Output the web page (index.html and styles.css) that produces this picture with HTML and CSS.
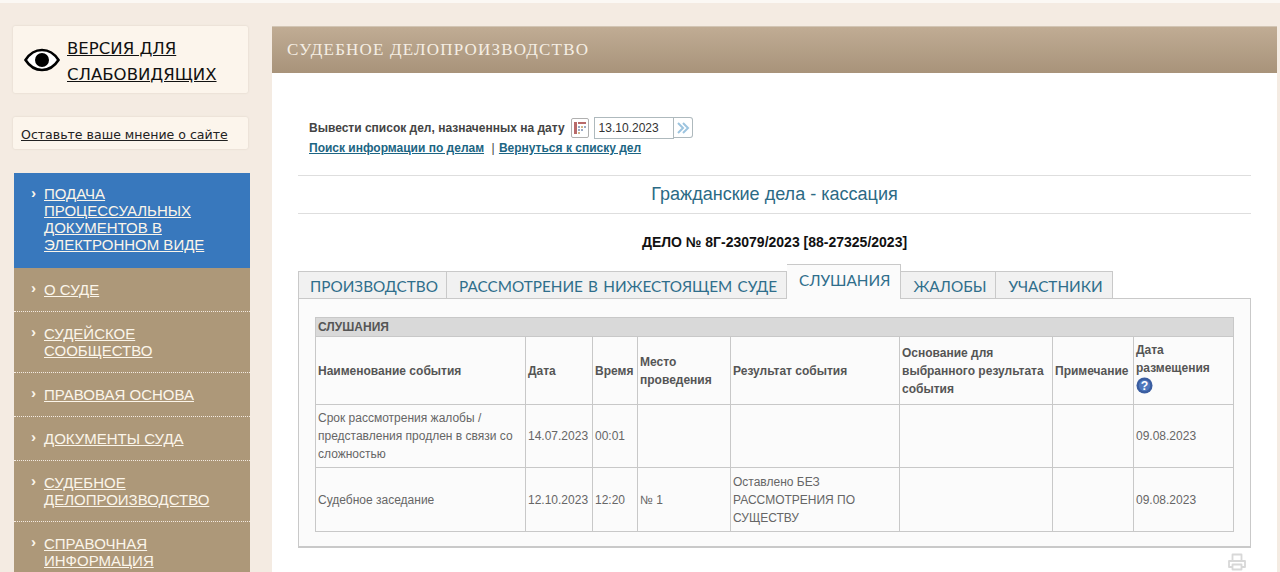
FILE: index.html
```html
<!doctype html>
<html>

<head>
  <title>Судебное делопроизводство</title>
  <link rel="stylesheet" href="styles.css">
</head>

<body>
  <div class="container">
    <div class="left-block">
      <div class="vi-box">
        <svg class="vi-icon" viewBox="0 0 36 24" width="36" height="24">
          <path d="M1.5 12C6 5 11.500 2 18 2s12 3 16.500 10C30 19 24.500 22 18 22S6 19 1.500 12z" fill="#fff" stroke="#000" stroke-width="2.600"/>
          <circle cx="18" cy="12" r="7" fill="#000"/>
        </svg>
        <a href="#" class="vi-link">ВЕРСИЯ ДЛЯ СЛАБОВИДЯЩИХ</a>
      </div>
      <div class="opinion-box"><a href="#">Оставьте ваше мнение о сайте</a></div>
      <ul class="menu">
        <li class="menu-active"><a href="#">ПОДАЧА ПРОЦЕССУАЛЬНЫХ ДОКУМЕНТОВ В ЭЛЕКТРОННОМ ВИДЕ</a></li>
        <li><a href="#">О СУДЕ</a></li>
        <li><a href="#">СУДЕЙСКОЕ СООБЩЕСТВО</a></li>
        <li><a href="#">ПРАВОВАЯ ОСНОВА</a></li>
        <li><a href="#">ДОКУМЕНТЫ СУДА</a></li>
        <li><a href="#">СУДЕБНОЕ ДЕЛОПРОИЗВОДСТВО</a></li>
        <li><a href="#">СПРАВОЧНАЯ ИНФОРМАЦИЯ</a></li>
      </ul>
    </div>

    <div class="right-block">
      <div class="page-title">СУДЕБНОЕ ДЕЛОПРОИЗВОДСТВО</div>
      <div class="content">
        <div class="filter">
          <div class="filter-row">
            <span>Вывести список дел, назначенных на дату</span>
            <span class="cal-button">
              <svg viewBox="0 0 14 14" width="14" height="14">
                <rect x="1" y="1" width="3" height="12" fill="#b86a6a"/>
                <rect x="5" y="1" width="8" height="2" fill="#b86a6a"/>
                <rect x="5" y="5" width="2" height="2" fill="#9aa9c4"/>
                <rect x="8" y="5" width="2" height="2" fill="#d3b68c"/>
                <rect x="11" y="5" width="2" height="2" fill="#9aa9c4"/>
                <rect x="5" y="8" width="2" height="2" fill="#9aa9c4"/>
                <rect x="8" y="8" width="2" height="2" fill="#9aa9c4"/>
                <rect x="5" y="11" width="2" height="2" fill="#d3b68c"/>
              </svg>
            </span>
            <span class="date-input">13.10.2023</span>
            <span class="go-button">
              <svg viewBox="0 0 14 12" width="14" height="12">
                <path d="M2 1l5 5-5 5M7 1l5 5-5 5" fill="none" stroke="#9cc4df" stroke-width="2"/>
              </svg>
            </span>
          </div>
          <div class="filter-links">
            <a href="#">Поиск информации по делам</a>
            <span class="sep">|</span>
            <a href="#">Вернуться к списку дел</a>
          </div>
        </div>

        <h2 class="section-title">Гражданские дела - кассация</h2>
        <div class="case-title">ДЕЛО № 8Г-23079/2023 [88-27325/2023]</div>

        <div class="tabs">
          <div class="tab">ПРОИЗВОДСТВО</div>
          <div class="tab">РАССМОТРЕНИЕ В НИЖЕСТОЯЩЕМ СУДЕ</div>
          <div class="tab tab-active">СЛУШАНИЯ</div>
          <div class="tab">ЖАЛОБЫ</div>
          <div class="tab">УЧАСТНИКИ</div>
        </div>

        <div class="panel">
          <table class="events">
            <colgroup>
              <col class="c1"><col class="c2"><col class="c3"><col class="c4">
              <col class="c5"><col class="c6"><col class="c7"><col class="c8">
            </colgroup>
            <tr class="caption-row"><td colspan="8">СЛУШАНИЯ</td></tr>
            <tr class="head-row">
              <th>Наименование события</th>
              <th>Дата</th>
              <th>Время</th>
              <th>Место проведения</th>
              <th>Результат события</th>
              <th>Основание для выбранного результата события</th>
              <th>Примечание</th>
              <th>Дата размещения
                <svg class="help" viewBox="0 0 18 18" width="17" height="17">
                  <circle cx="9" cy="9" r="8.500" fill="#3a5da0"/>
                  <circle cx="9" cy="9" r="6" fill="#4f78bd"/>
                  <text x="9" y="13.500" class="help-mark">?</text>
                </svg>
              </th>
            </tr>
            <tr class="row-one">
              <td>Срок рассмотрения жалобы / представления продлен в связи со сложностью</td>
              <td>14.07.2023</td>
              <td>00:01</td>
              <td></td>
              <td></td>
              <td></td>
              <td></td>
              <td>09.08.2023</td>
            </tr>
            <tr class="row-two">
              <td>Судебное заседание</td>
              <td>12.10.2023</td>
              <td>12:20</td>
              <td>№ 1</td>
              <td>Оставлено БЕЗ РАССМОТРЕНИЯ ПО СУЩЕСТВУ</td>
              <td></td>
              <td></td>
              <td>09.08.2023</td>
            </tr>
          </table>
        </div>

        <div class="print-row">
          <svg viewBox="0 0 18 18" width="18" height="18">
            <path d="M4.500 8V1.500h9V8M4.500 14H1V8h16v6h-3.500M4.500 11.500h9v5h-9z" fill="#fff" stroke="#d8d8d8" stroke-width="1.800" stroke-linejoin="round"/>
          </svg>
        </div>
      </div>
    </div>
  </div>
</body>

</html>
```

FILE: styles.css
```css
html, body {
  height: 572px;
  overflow: hidden;
}

body {
  margin: 0;
  background-color: #f4ebe2;
  border-top: 3px solid #fbf8f4;
  font-family: "Liberation Sans", Arial, sans-serif;
  box-sizing: border-box;
}

a {
  color: inherit;
}

.container {
  display: flex;
  padding-top: 23px;
}

/* left column */
.left-block {
  width: 237px;
  margin-left: 13px;
  flex-shrink: 0;
}

.vi-box {
  display: flex;
  align-items: center;
  gap: 7px;
  width: 235px;
  height: 67px;
  padding-left: 11px;
  box-sizing: border-box;
  background-color: #fcf5ec;
  border-radius: 2px;
  box-shadow: 0 0 2px #d9cfc3;
}

.vi-icon {
  flex-shrink: 0;
}

.vi-link {
  margin-top: 4px;
  font-family: "DejaVu Sans", sans-serif;
  font-size: 16.550px;
  line-height: 26px;
  color: #111;
}

.opinion-box {
  width: 235px;
  height: 32px;
  margin-top: 24px;
  padding-left: 8px;
  box-sizing: border-box;
  background-color: #fcf5ec;
  border-radius: 2px;
  box-shadow: 0 0 2px #d9cfc3;
  font-family: "DejaVu Sans", sans-serif;
  font-size: 12.550px;
  line-height: 35px;
  color: #222;
}

.menu {
  list-style: none;
  margin: 24px 0 0 1px;
  padding: 0;
}

.menu li {
  position: relative;
  padding: 13px 36px 13px 30px;
  background-color: #ad9879;
  border-bottom: 1px dotted #f4ebe2;
  font-size: 15px;
  line-height: 17px;
  color: #fbf5ea;
}

.menu li::before {
  content: "›";
  position: absolute;
  left: 17px;
  top: 11px;
  font-weight: bold;
  font-size: 15px;
}

.menu .menu-active {
  padding-top: 12px;
  padding-bottom: 15px;
  background-color: #3878bd;
  border-bottom: none;
}

/* right column */
.right-block {
  width: 1005px;
  margin-left: 22px;
  background-color: #fff;
  height: 560px;
}

.page-title {
  height: 47px;
  padding-left: 15px;
  background: linear-gradient(#c0ac94, #a8937a);
  border-top: 1px solid #d2c5b4;
  box-sizing: border-box;
  font-family: "Liberation Serif", serif;
  font-size: 17px;
  line-height: 46px;
  letter-spacing: 1.180px;
  color: #f5eee4;
}

.content {
  width: 953px;
  margin-left: 26px;
}

.filter {
  padding: 44px 0 0 11px;
  height: 58px;
  font-size: 12px;
  font-weight: bold;
  color: #444;
}

.filter-row {
  display: flex;
  align-items: center;
  height: 21px;
}

.cal-button {
  display: flex;
  align-items: center;
  justify-content: center;
  width: 18px;
  height: 20px;
  margin-left: 6px;
  border: 1px solid #b0b0b0;
  border-radius: 2px;
  box-sizing: border-box;
}

.date-input {
  width: 80px;
  height: 22px;
  margin-left: 5px;
  padding-left: 4px;
  border: 1px solid #aeb9bd;
  box-sizing: border-box;
  font-size: 12px;
  font-weight: normal;
  line-height: 20px;
  color: #333;
}

.go-button {
  display: flex;
  align-items: center;
  justify-content: center;
  width: 19px;
  height: 21px;
  border: 1px solid #aeb9bd;
  border-left: none;
  border-radius: 0 3px 3px 0;
  box-sizing: border-box;
}

.filter-links {
  margin-top: 3px;
  line-height: 14px;
  color: #1c6583;
}

.sep {
  margin: 0 1px 0 4px;
  font-weight: normal;
  color: #444;
}

.section-title {
  margin: 0;
  height: 39px;
  border-top: 1px solid #dedede;
  border-bottom: 1px solid #dedede;
  box-sizing: border-box;
  font-size: 18.050px;
  font-weight: normal;
  line-height: 37px;
  text-align: center;
  color: #2b6a85;
}

.case-title {
  margin-top: 20px;
  height: 30px;
  font-size: 14px;
  font-weight: bold;
  line-height: 16px;
  text-align: center;
  color: #111;
}

.tabs {
  display: flex;
  align-items: flex-end;
  height: 34px;
}

.tab {
  height: 27px;
  padding: 0 9px 0 12px;
  background-color: #f1f1f1;
  border-top: 1px solid #c9c9c9;
  border-right: 1px solid #c9c9c9;
  box-sizing: border-box;
  font-family: "Lato", sans-serif;
  font-size: 15.300px;
  word-spacing: 1.300px;
  line-height: 29px;
  color: #2f6e8b;
}

.tab:first-child {
  padding: 0 8px 0 11px;
  border-left: 1px solid #c9c9c9;
}

.tab-active {
  height: 35px;
  margin-bottom: -1px;
  padding-right: 10px;
  position: relative;
  background-color: #fbfbfb;
  line-height: 31px;
}

.panel {
  height: 250px;
  padding: 18px 16px 0 16px;
  background-color: #fbfbfb;
  border: 1px solid #c9c9c9;
  border-bottom: 2px solid #c9c9c9;
  box-sizing: border-box;
}

.events {
  width: 918px;
  table-layout: fixed;
  border-collapse: collapse;
  font-size: 12px;
  line-height: 18px;
  color: #666;
}

.c1 { width: 210px; }
.c2 { width: 67px; }
.c3 { width: 45px; }
.c4 { width: 93px; }
.c5 { width: 169px; }
.c6 { width: 153px; }
.c7 { width: 81px; }
.c8 { width: 100px; }

.events td,
.events th {
  padding: 0 2px;
  border: 1px solid #c8c8c8;
  text-align: left;
  font-weight: normal;
  vertical-align: middle;
}

.events th {
  font-weight: bold;
  color: #555;
}

.caption-row td {
  height: 18px;
  background-color: #d9d9d9;
  font-weight: bold;
  line-height: 14px;
  color: #555;
}

.head-row th {
  height: 67px;
}

.row-one td {
  height: 62px;
}

.row-two td {
  height: 63px;
}

.help {
  display: block;
  margin-bottom: 6px;
}

.help-mark {
  font-size: 13px;
  font-weight: bold;
  text-anchor: middle;
  fill: #fff;
}

.print-row {
  display: flex;
  justify-content: flex-end;
  padding: 5px 5px 0 0;
}
```
